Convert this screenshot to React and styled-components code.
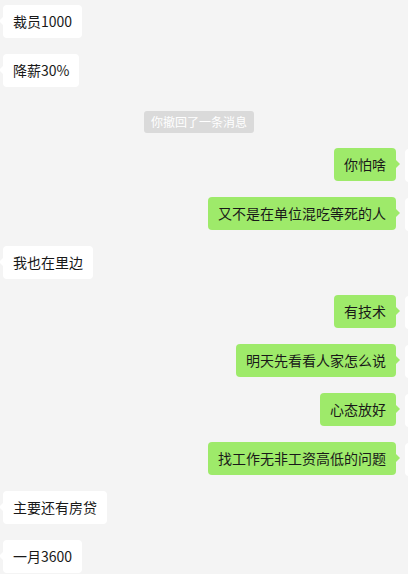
import React from 'react'
import styled, { createGlobalStyle } from 'styled-components'

const Global = createGlobalStyle`
  html, body {
    margin: 0;
    padding: 0;
    background: #f4f4f4;
    overflow: hidden;
  }
  body {
    font-family: "Noto Sans CJK SC", "Liberation Sans", sans-serif;
  }
`

const Chat = styled.div`
  width: 408px;
  height: 574px;
  overflow: hidden;
  display: flex;
  flex-direction: column;
  gap: 16px;
  padding-top: 5px;
  box-sizing: border-box;
`

const Row = styled.div`
  display: flex;
  align-items: flex-start;
  justify-content: ${p => (p.$mine ? 'flex-end' : 'flex-start')};
  padding-left: 3px;
  margin-right: ${p => (p.$mine ? '-31px' : '0')};
  gap: 9px;
`

const Bubble = styled.div`
  position: relative;
  box-sizing: border-box;
  height: 33px;
  background: ${p => (p.$mine ? '#9eea6a' : '#ffffff')};
  color: #191919;
  font-size: 14px;
  line-height: 19px;
  padding: 7px 10px;
  border-radius: 4px;
  white-space: nowrap;

  &::before {
    content: '';
    position: absolute;
    top: 12px;
    ${p => (p.$mine ? 'right: -4px;' : 'left: -4px;')}
    border-top: 4px solid transparent;
    border-bottom: 4px solid transparent;
    ${p => (p.$mine ? 'border-left: 4px solid #9eea6a;' : 'border-right: 4px solid #ffffff;')}
  }
`

const Avatar = styled.div`
  width: 34px;
  height: 33px;
  margin-top: 1px;
  margin-bottom: -1px;
  border-radius: 4px;
  background: #ffffff;
  flex-shrink: 0;
`

const NoticeRow = styled.div`
  display: flex;
  justify-content: center;
  padding: 8px 10px 0 0;
  margin-bottom: -1px;
`

const Notice = styled.div`
  box-sizing: border-box;
  height: 22px;
  background: #dadada;
  color: #ffffff;
  font-size: 12px;
  line-height: 22px;
  padding: 0 7px;
  border-radius: 3px;
  white-space: nowrap;
`

const messages = [
  { text: '裁员1000' },
  { text: '降薪30%' },
  { notice: '你撤回了一条消息' },
  { text: '你怕啥', mine: true },
  { text: '又不是在单位混吃等死的人', mine: true },
  { text: '我也在里边' },
  { text: '有技术', mine: true },
  { text: '明天先看看人家怎么说', mine: true },
  { text: '心态放好', mine: true },
  { text: '找工作无非工资高低的问题', mine: true },
  { text: '主要还有房贷' },
  { text: '一月3600' },
]

const App = () => {
  return (
    <>
      <Global />
      <Chat>
        {messages.map((m, i) =>
          m.notice ? (
            <NoticeRow key={i}>
              <Notice>{m.notice}</Notice>
            </NoticeRow>
          ) : (
            <Row key={i} $mine={m.mine}>
              <Bubble $mine={m.mine}>{m.text}</Bubble>
              {m.mine && <Avatar />}
            </Row>
          )
        )}
      </Chat>
    </>
  )
}

export default App
